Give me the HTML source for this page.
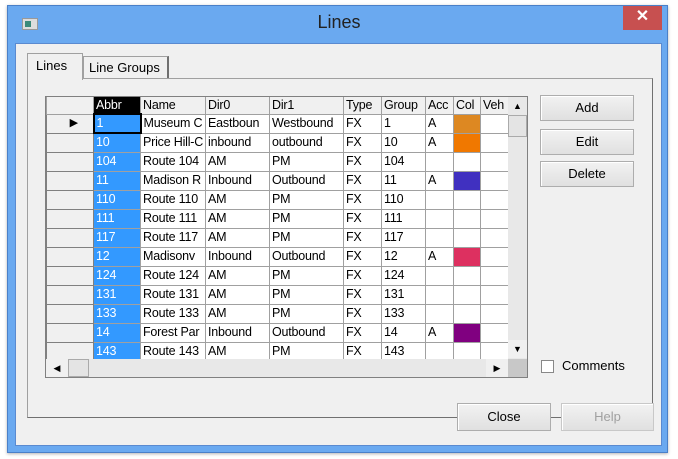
<!DOCTYPE html>
<html><head><style>
*{box-sizing:border-box;margin:0;padding:0}
body{width:678px;height:459px;background:#fff;font-family:"Liberation Sans",sans-serif;font-size:13px;position:relative;overflow:hidden}
.abs{position:absolute}
.win{left:7px;top:5px;width:661px;height:448px;background:#6aa9f0;border:1px solid #4a80c8;box-shadow:0 1px 3px rgba(0,0,0,.3)}
.client{left:15px;top:43px;width:647px;height:403px;background:#f0f0f0;border:1px solid #5a8ad0}
.btn{position:absolute;background:linear-gradient(#f2f2f2,#e0e0e0);border:1px solid #adadad;text-align:center;font-size:13px;color:#000;box-shadow:inset 1px 1px 0 #fff}
table{border-collapse:collapse;table-layout:fixed;font-size:12.5px;letter-spacing:-0.2px}
td{border:1px solid #a0a0a0;height:19px;padding:0 2px;white-space:nowrap;overflow:hidden;background:#fff;line-height:17px}
th{border:1px solid #a0a0a0;border-top:none;height:17px;padding:0 2px;font-weight:normal;text-align:left;background:#f0f0f0;white-space:nowrap;overflow:hidden}
td.rh{background:#f0f0f0;border-color:#808080}
td.a{background:#3399ff;color:#fff}
</style></head><body>
<div class="abs win"></div>
<div class="abs" style="left:22px;top:18px;width:16px;height:12px;background:#ddd;border:1px solid #999"><div style="margin:2px;width:6px;height:6px;background:#3a8a7a"></div></div>
<div class="abs" style="left:0;width:678px;top:12px;text-align:center;font-size:18px;color:#222">Lines</div>
<div class="abs" style="left:623px;top:6px;width:39px;height:24px;background:#c75050;color:#fff;text-align:center;font-size:16px;line-height:22px;font-weight:bold">✕</div>
<div class="abs client"></div>
<div class="abs" style="left:27px;top:78px;width:626px;height:340px;border:1px solid #a0a0a0;border-right-color:#707070;border-bottom-color:#707070;background:#f0f0f0"></div>
<div class="abs" style="left:27px;top:53px;width:56px;height:27px;border:1px solid #a0a0a0;border-bottom:none;background:#f0f0f0;padding:4px 0 0 8px">Lines</div>
<div class="abs" style="left:83px;top:56px;width:86px;height:22px;border:1px solid #a0a0a0;border-right:2px solid #707070;border-bottom:none;background:#f0f0f0;padding:3px 0 0 5px">Line Groups</div>
<div class="abs" style="left:45px;top:96px;width:483px;height:282px;border:1px solid #808080;background:#f0f0f0;overflow:hidden">
<table style="width:463px">
<colgroup><col style="width:47px"><col style="width:47px"><col style="width:65px"><col style="width:64px"><col style="width:74px"><col style="width:38px"><col style="width:44px"><col style="width:28px"><col style="width:27px"><col style="width:29px"></colgroup>
<tr><th style="background:#f0f0f0"></th><th style="background:#000;color:#fff">Abbr</th><th>Name</th><th>Dir0</th><th>Dir1</th><th>Type</th><th>Group</th><th>Acc</th><th>Col</th><th>Veh</th></tr>
<tr><td class="rh" style="text-align:center;font-size:11px;padding-left:10px;color:#000">▶</td><td class="a" style="border:2px solid #000">1</td><td>Museum C</td><td>Eastboun</td><td>Westbound</td><td>FX</td><td>1</td><td>A</td><td style="background:#dd8822"></td><td></td></tr>
<tr><td class="rh"></td><td class="a">10</td><td>Price Hill-C</td><td>inbound</td><td>outbound</td><td>FX</td><td>10</td><td>A</td><td style="background:#f07800"></td><td></td></tr>
<tr><td class="rh"></td><td class="a">104</td><td>Route 104</td><td>AM</td><td>PM</td><td>FX</td><td>104</td><td></td><td></td><td></td></tr>
<tr><td class="rh"></td><td class="a">11</td><td>Madison R</td><td>Inbound</td><td>Outbound</td><td>FX</td><td>11</td><td>A</td><td style="background:#4030c0"></td><td></td></tr>
<tr><td class="rh"></td><td class="a">110</td><td>Route 110</td><td>AM</td><td>PM</td><td>FX</td><td>110</td><td></td><td></td><td></td></tr>
<tr><td class="rh"></td><td class="a">111</td><td>Route 111</td><td>AM</td><td>PM</td><td>FX</td><td>111</td><td></td><td></td><td></td></tr>
<tr><td class="rh"></td><td class="a">117</td><td>Route 117</td><td>AM</td><td>PM</td><td>FX</td><td>117</td><td></td><td></td><td></td></tr>
<tr><td class="rh"></td><td class="a">12</td><td>Madisonv</td><td>Inbound</td><td>Outbound</td><td>FX</td><td>12</td><td>A</td><td style="background:#dd3060"></td><td></td></tr>
<tr><td class="rh"></td><td class="a">124</td><td>Route 124</td><td>AM</td><td>PM</td><td>FX</td><td>124</td><td></td><td></td><td></td></tr>
<tr><td class="rh"></td><td class="a">131</td><td>Route 131</td><td>AM</td><td>PM</td><td>FX</td><td>131</td><td></td><td></td><td></td></tr>
<tr><td class="rh"></td><td class="a">133</td><td>Route 133</td><td>AM</td><td>PM</td><td>FX</td><td>133</td><td></td><td></td><td></td></tr>
<tr><td class="rh"></td><td class="a">14</td><td>Forest Par</td><td>Inbound</td><td>Outbound</td><td>FX</td><td>14</td><td>A</td><td style="background:#800080"></td><td></td></tr>
<tr><td class="rh"></td><td class="a">143</td><td>Route 143</td><td>AM</td><td>PM</td><td>FX</td><td>143</td><td></td><td></td><td></td></tr>
</table>
<div class="abs" style="left:462px;top:0;width:19px;height:262px;background:#e8e8e8"></div>
<div class="abs" style="left:462px;top:0;width:19px;height:18px;font-size:9px;text-align:center;line-height:18px">▲</div>
<div class="abs" style="left:462px;top:18px;width:19px;height:22px;background:#e4e4e4;border:1px solid #aaa"></div>
<div class="abs" style="left:462px;top:243px;width:19px;height:18px;font-size:9px;text-align:center;line-height:18px;background:#f0f0f0">▼</div>
<div class="abs" style="left:0;top:262px;width:462px;height:19px;background:#e8e8e8"></div>
<div class="abs" style="left:0;top:262px;width:22px;height:18px;font-size:9px;text-align:center;line-height:18px;background:#f0f0f0">◀</div>
<div class="abs" style="left:22px;top:262px;width:21px;height:18px;background:#e4e4e4;border:1px solid #aaa"></div>
<div class="abs" style="left:440px;top:262px;width:22px;height:18px;font-size:9px;text-align:center;line-height:18px;background:#f0f0f0">▶</div>
<div class="abs" style="left:462px;top:262px;width:19px;height:19px;background:#c8c8c8"></div>
</div>
<div class="btn" style="left:540px;top:95px;width:94px;height:26px;line-height:24px">Add</div>
<div class="btn" style="left:540px;top:129px;width:94px;height:26px;line-height:24px">Edit</div>
<div class="btn" style="left:540px;top:161px;width:94px;height:26px;line-height:24px">Delete</div>
<div class="abs" style="left:541px;top:360px;width:13px;height:13px;border:1px solid #888;background:#fff"></div>
<div class="abs" style="left:562px;top:358px">Comments</div>
<div class="btn" style="left:457px;top:403px;width:94px;height:28px;line-height:26px">Close</div>
<div class="btn" style="left:561px;top:403px;width:93px;height:28px;line-height:26px;color:#a0a0a0;border-color:#c8c8c8">Help</div>
</body></html>
